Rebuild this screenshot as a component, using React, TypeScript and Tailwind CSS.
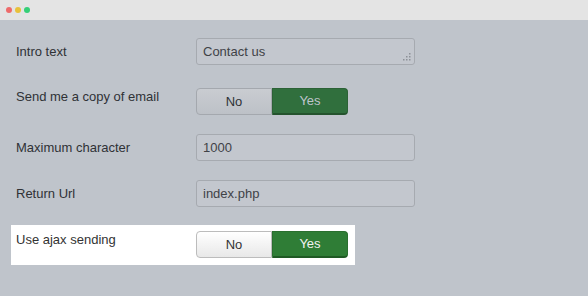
import React from 'react'

function Toggle({ lit = false }: { lit?: boolean }) {
  return (
    <div className="flex h-[27px] w-[152px] text-[13px]">
      <div
        className={`flex w-[76px] items-center justify-center rounded-l-[4px] border ${
          lit
            ? 'border-[#bcbcbc] bg-gradient-to-b from-[#ffffff] to-[#e8e8e8] text-[#333333]'
            : 'border-[#a4a8ae] bg-gradient-to-b from-[#c9ccd1] to-[#bdc1c7] text-[#2f3236]'
        }`}
      >
        No
      </div>
      <div
        className={`flex w-[76px] items-center justify-center rounded-r-[4px] border border-b-2 ${
          lit
            ? 'border-[#2a6f2f] border-b-[#1f5a24] bg-[#2f7d36] text-[#f2f2f2]'
            : 'border-[#2c6236] border-b-[#24532d] bg-[#306f3d] text-[#bfc5cc]'
        }`}
      >
        Yes
      </div>
    </div>
  )
}

function TextBox({ value, resize = false }: { value: string; resize?: boolean }) {
  return (
    <div className="relative flex h-[27px] w-[219px] items-center rounded-[3px] border border-[#a6aab0] bg-[#c3c7ce] px-[6px] text-[13px] text-[#3f4247]">
      {value}
      {resize && (
        <svg className="absolute bottom-[3px] right-[3px]" width="8" height="8" viewBox="0 0 8 8">
          <rect x="6" y="0" width="1.5" height="1.5" fill="#8d9197" />
          <rect x="3" y="3" width="1.5" height="1.5" fill="#8d9197" />
          <rect x="6" y="3" width="1.5" height="1.5" fill="#8d9197" />
          <rect x="0" y="6" width="1.5" height="1.5" fill="#8d9197" />
          <rect x="3" y="6" width="1.5" height="1.5" fill="#8d9197" />
          <rect x="6" y="6" width="1.5" height="1.5" fill="#8d9197" />
        </svg>
      )}
    </div>
  )
}

export default function App() {
  return (
    <div className="h-[296px] w-[588px] overflow-hidden bg-[#bfc4cb] font-['Liberation_Sans',Arial,sans-serif] text-[#2f3236]">
      {/* Title bar */}
      <div className="flex h-5 items-center gap-[3px] bg-[#e4e4e4] pl-[6px]">
        <span className="h-[6px] w-[6px] rounded-full bg-[#ee6b6b]" />
        <span className="h-[6px] w-[6px] rounded-full bg-[#e8c13c]" />
        <span className="h-[6px] w-[6px] rounded-full bg-[#35cf77]" />
      </div>

      <div className="flex flex-col pl-4 pt-[18px] text-[13px]">
        {/* Intro text */}
        <div className="flex items-center">
          <div className="w-[180px]">Intro text</div>
          <TextBox value="Contact us" resize />
        </div>

        {/* Send copy */}
        <div className="mt-[23px] flex items-start">
          <div className="w-[180px] leading-[18px]">Send me a copy of email</div>
          <Toggle />
        </div>

        {/* Maximum character */}
        <div className="mt-[19px] flex items-center">
          <div className="w-[180px]">Maximum character</div>
          <TextBox value="1000" />
        </div>

        {/* Return Url */}
        <div className="mt-[19px] flex items-center">
          <div className="w-[180px]">Return Url</div>
          <TextBox value="index.php" />
        </div>

        {/* Use ajax sending - highlighted */}
        <div className="-ml-[5px] mt-[18px] flex w-[344px] items-start bg-white pb-[7px] pl-[5px] pt-[6px] text-[#333333]">
          <div className="w-[180px] leading-[18px]">Use ajax sending</div>
          <Toggle lit />
        </div>
      </div>
    </div>
  )
}
